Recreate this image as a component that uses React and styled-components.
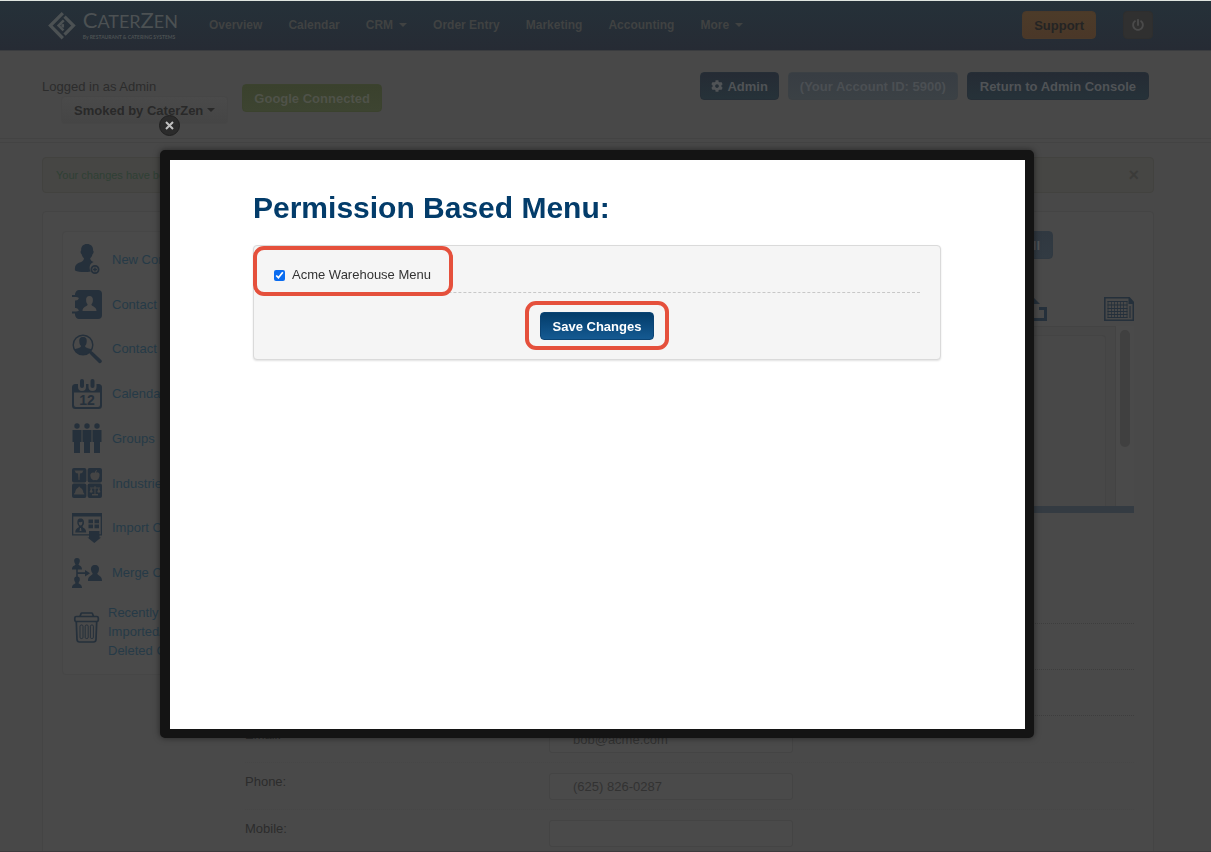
import styled, { createGlobalStyle } from 'styled-components';
import { FaCog, FaPowerOff } from 'react-icons/fa';

const GlobalStyle = createGlobalStyle`
  * {
    box-sizing: border-box;
  }

  body {
    margin: 0;
    background: #484848;
    color: #2c2c2c;
    font-family: "Liberation Sans", Arial, Helvetica, sans-serif;
    font-size: 13px;
    line-height: 18px;
  }

  button, input {
    font-family: inherit;
    font-size: inherit;
  }
`;

const Page = styled.div`
  height: 100vh;
  overflow: hidden;
  border-top: 1px solid #dfe5e0;
`;

const Container = styled.div`
  display: flex;
  align-items: ${({ $align }) => $align || 'center'};
  margin: 0 57px 0 42px;
`;

const NavBar = styled.nav`
  height: 50px;
  background: linear-gradient(#253139, #262b34);
  border-bottom: 1px solid #3a3c3f;
`;

const Logo = styled.a`
  display: flex;
  align-items: center;
  gap: 6px;
  width: 136px;
  height: 49px;
  margin: 0 31px 0 0;
  padding-left: 6px;
  color: #4c5153;
  text-decoration: none;
`;

const LogoText = styled.span`
  display: flex;
  flex-direction: column;
  padding-bottom: 4px;
  font-family: Lato, sans-serif;
  white-space: nowrap;
`;

const LogoName = styled.span`
  font-size: 18px;
  line-height: 26px;
`;

const LogoLetter = styled.span`
  font-size: ${({ $big }) => ($big ? '22px' : '18px')};
`;

const LogoTagline = styled.span`
  font-size: 5px;
  font-weight: 700;
  line-height: 6px;
`;

const NavList = styled.ul`
  display: flex;
  flex: 1;
  gap: 26px;
  margin: 0;
  padding: 0 0 2px;
  list-style: none;
`;

const NavLink = styled.a`
  color: #404242;
  font-size: 12px;
  font-weight: 700;
  text-decoration: none;
  white-space: nowrap;
`;

const Caret = styled.span`
  display: inline-block;
  margin-left: ${({ $gap }) => $gap || '6px'};
  border-top: 4px solid currentColor;
  border-left: 4px solid transparent;
  border-right: 4px solid transparent;
  vertical-align: middle;
`;

const tones = {
  navy: 'color: #505356; background: linear-gradient(#252b34, #263239); border-color: #262e36;',
  muted: 'color: #4b4f53; background: linear-gradient(#383d43, #3b4145); border-color: #3b4044;',
  blue: 'color: #505356; background: linear-gradient(#303840, #323b43); border-color: #303941;',
  green: 'color: #4f5249; background: linear-gradient(#3a412d, #3d4431); border-color: #3b422e;',
  orange: 'color: #242424; background: linear-gradient(#4c3b29, #4a3728); border-color: #4a3929;',
  dark: 'color: #4a4a4a; background: #303030; border-color: #2e2e2e;',
  grey: 'color: #292929; background: linear-gradient(#4a4a4a, #454545); border-color: #464646;',
  primary: 'color: #fff; background: linear-gradient(#033c6a, #155a92); border-color: #0b4474;',
};

const Button = styled.button`
  display: inline-flex;
  align-items: center;
  justify-content: center;
  gap: 4px;
  height: 28px;
  padding: 0 ${({ $pad }) => $pad || '12px'};
  border: 1px solid;
  border-radius: 4px;
  font-weight: 700;
  white-space: nowrap;
  ${({ $tone }) => tones[$tone]}
`;

const NavActions = styled.div`
  display: flex;
  gap: 27px;
  padding: 0 1px 1px 0;
`;

const Header = styled.header`
  height: 88px;
  border-bottom: 1px solid #434343;
`;

const HeaderRule = styled.div`
  height: 4px;
  border-bottom: 1px solid #434343;
`;

const Account = styled.div`
  display: flex;
  flex-direction: column;
  align-items: flex-start;
  margin: 27px 14px 0 0;
  font-size: 13px;

  button {
    margin-left: 19px;
  }
`;

const GoogleStatus = styled.div`
  flex: 1;
  padding-top: 33px;
`;

const AdminActions = styled.div`
  display: flex;
  gap: 9px;
  padding: 21px 5px 0 0;
`;

const Alert = styled.div`
  display: flex;
  flex: 1;
  align-items: center;
  justify-content: space-between;
  height: 36px;
  margin: 14px 0 18px;
  padding: 0 12px 0 13px;
  background: #464644;
  border: 1px solid #42423f;
  border-radius: 4px;
  color: #2f4034;
  font-size: 11px;
`;

const AlertClose = styled.button`
  padding: 0 2px;
  background: none;
  border: 0;
  color: #3b3b39;
  font-size: 18px;
  font-weight: 700;
`;

const Card = styled.main`
  display: flex;
  flex: 1;
  align-items: flex-start;
  gap: 20px;
  min-height: 760px;
  padding: 19px;
  background: #494949;
  border: 1px solid #444444;
  border-radius: 4px;
`;

const Sidebar = styled.aside`
  width: 163px;
  padding: 5px 9px 7px;
  background: #4a4a4a;
  border: 1px solid #464646;
  border-radius: 4px;
`;

const SideList = styled.ul`
  display: grid;
  grid-template-rows: repeat(8, 1fr) 72px;
  min-height: 430px;
  margin: 0;
  padding: 0;
  list-style: none;
`;

const SideLink = styled.a`
  display: flex;
  align-items: center;
  gap: ${({ $tight }) => ($tight ? '6px' : '10px')};
  height: 100%;
  color: #263a47;
  line-height: 19px;
  text-decoration: none;
  white-space: nowrap;

  svg {
    flex: none;
    margin-bottom: ${({ $tight }) => ($tight ? '8px' : '0')};
    color: #25303b;
  }
`;

const Details = styled.section`
  flex: 1;
  min-width: 0;
`;

const ViewRow = styled.div`
  display: flex;
  justify-content: flex-end;
  margin: 0 81px 37px 0;
`;

const ToolRow = styled.div`
  display: flex;
  justify-content: flex-end;
  gap: 57px;
  color: #25303b;
`;

const ListBox = styled.div`
  display: flex;
  height: 187px;
  margin-top: 4px;
  border-bottom: 7px solid #343b42;
`;

const ListBody = styled.div`
  flex: 1;
  padding: 8px 9px 0;
  background: #474747;
  border: 1px solid #434343;
  border-bottom: 0;
`;

const ListInner = styled.div`
  height: 100%;
  background: #484848;
  border: 1px solid #444444;
  border-bottom: 0;
  border-radius: 4px 4px 0 0;
`;

const ScrollTrack = styled.div`
  width: 18px;
  padding: 4px;
  background: #4a4a4a;
`;

const ScrollThumb = styled.div`
  height: 117px;
  background: #404040;
  border-radius: 5px;
`;

const Form = styled.form`
  padding-top: 65px;
`;

const Field = styled.div`
  display: grid;
  grid-template-columns: 304px 244px;
  align-items: start;
  height: ${({ $faint }) => ($faint ? '47px' : '46px')};
  padding-top: 10px;
  border-bottom: 1px dotted ${({ $faint }) => ($faint ? '#464646' : '#3d3d3d')};
`;

const TextInput = styled.input`
  height: 27px;
  padding: 0 23px;
  background: #4a4a4a;
  border: 1px solid #444444;
  border-radius: 3px;
  color: #323232;
`;

const Overlay = styled.div`
  position: fixed;
  inset: 0;
  display: flex;
  padding: 150px 177px 113px 160px;
  border-bottom: 1px solid #3d3a3d;
`;

const Modal = styled.div`
  position: relative;
  flex: 1;
  padding: 27px 84px 27px 83px;
  background: #fff;
  border: 9px solid #141414;
  border-top-width: 10px;
  border-left-width: 10px;
  border-radius: 5px;
  box-shadow: 0 0 6px rgba(0, 0, 0, 0.5);
`;

const CloseButton = styled.button`
  position: absolute;
  top: -45px;
  left: -11px;
  display: flex;
  align-items: center;
  justify-content: center;
  width: 21px;
  height: 21px;
  padding: 0;
  background: #2b2b2b;
  border: 1px solid #202020;
  border-radius: 50%;
  color: #c0c0c0;
`;

const Title = styled.h1`
  margin: 0 0 17px;
  color: #033c6a;
  font-size: 30px;
  line-height: 41px;
`;

const Well = styled.div`
  padding: 0 20px 19px;
  background: #f5f5f5;
  border: 1px solid #dadada;
  border-radius: 4px;
  box-shadow: 0 1px 2px rgba(0, 0, 0, 0.12);
`;

const OptionRow = styled.div`
  display: flex;
  padding: 20px 0 8px;
  border-bottom: 1px dashed #c8c8c8;
`;

const SaveRow = styled.div`
  display: flex;
  justify-content: center;
  padding-top: 19px;
`;

const Highlight = styled.div`
  position: relative;
  display: flex;

  &::after {
    content: '';
    position: absolute;
    inset: ${({ $inset }) => $inset};
    border: 4px solid #e5503c;
    border-radius: 11px;
    pointer-events: none;
  }
`;

const CheckLabel = styled.label`
  display: flex;
  align-items: center;
  gap: 7px;
  color: #333;
`;

const Check = styled.input`
  width: 11px;
  height: 11px;
  margin: 0;
  accent-color: #0a6cf0;
`;

const Icon = ({ children, height = 30 }) => (
  <svg width="30" height={height} viewBox={`0 0 30 ${height}`} fill="currentColor" aria-hidden="true">
    {children}
  </svg>
);

const NewContactIcon = () => (
  <Icon>
    <path d="M15 0c4 0 6.500 2.800 6 6.500 1 .3.700 3-.5 3.700-.4 2-1.300 3-2.300 4 .2 2 1 2.800 3.300 3.800-4 1.500-5 6-2.800 9.500-5 1-12 .8-15.700-1C2.500 22 4 20 7 18.800c3.500-1.200 4.800-2.200 5-4.600-1-1-1.900-2-2.300-4C8.500 9.500 8.200 6.800 9.200 6.500 8.800 2.800 11 0 15 0z" />
    <circle cx="23" cy="25.500" r="3.600" fill="none" stroke="currentColor" strokeWidth="1.800" />
    <path d="M22.300 23.500h1.400v1.300H25v1.400h-1.300v1.300h-1.400v-1.300H21v-1.400h1.300z" />
  </Icon>
);

const ContactBookIcon = () => (
  <Icon>
    <path d="M7 1h19a4 4 0 0 1 4 4v21a4 4 0 0 1-4 4H7q-3 0-4-4v-1.500H0v-2h4q1.500 0 3-1-1-2.500-3-2.500H3V11.500h1q2 0 3-2.500-1.500-1-3-1H0V6h3V5q1-4 4-4z" />
    <path fill="#4a4a4a" d="M17.500 7c2.500 0 3.600 1.800 3.400 4 0 2.500-.9 3.700-1.500 4.500.2 2.500 5.100 1.500 5.100 6.500h-14c0-5 4.900-4 5.100-6.500-.6-.8-1.500-2-1.500-4.500-.2-2.200.9-4 3.400-4z" />
  </Icon>
);

const SearchContactIcon = () => (
  <Icon>
    <circle cx="11" cy="11" r="9.800" fill="none" stroke="currentColor" strokeWidth="1.400" />
    <path d="M11 3c3 0 4 2 3.700 4.500-.1 2.500-1 3.800-1.700 4.500.3 2.500 5 2 6.500 3.500-1.500 3.500-5 5.300-8.500 5.300S4 19 2.500 15.500C4 14 8.700 14.500 9 12c-.7-.7-1.600-2-1.700-4.500C7 5 8 3 11 3z" />
    <path d="M18.500 16.500l2.500 1.700 8.500 8q.8 1.300-.3 2.300t-2.200.5L18 20l-1.300-2z" />
  </Icon>
);

const CalendarIcon = () => (
  <Icon>
    <path fillRule="evenodd" d="M3.500 5H6v3a4 4 0 0 0 8 0V5h2.500v3a4 4 0 0 0 8 0V5h2A3.500 3.500 0 0 1 30 8.500v18a3.500 3.500 0 0 1-3.500 3.500h-23A3.500 3.500 0 0 1 0 26.500v-18A3.500 3.500 0 0 1 3.500 5zM2 13.500v12.500a2 2 0 0 0 2 2h22a2 2 0 0 0 2-2V13.500z" />
    <rect x="8" y="0" width="4" height="9" rx="2" />
    <rect x="18.500" y="0" width="4" height="9" rx="2" />
    <text x="15" y="25.500" textAnchor="middle" fontSize="14" fontWeight="700">12</text>
  </Icon>
);

const GroupsIcon = () => (
  <Icon>
    {[5, 15, 25].map((x) => (
      <g key={x}>
        <circle cx={x} cy="3" r="2.700" />
        <path d={`M${x - 4.500} 7h9v12h-1.500v11h-6V19h-1.500z`} />
      </g>
    ))}
  </Icon>
);

const IndustriesIcon = () => (
  <Icon>
    <rect width="14.400" height="14.400" rx="2" />
    <rect x="15.600" width="14.400" height="14.400" rx="2" />
    <rect y="15.600" width="14.400" height="14.400" rx="2" />
    <rect x="15.600" y="15.600" width="14.400" height="14.400" rx="2" />
    <g fill="#454545">
      <path d="M2.500 2.500h9q-.5 2.500-3.500 3L7.500 12h-1L6 5.500q-3-.5-3.500-3z" />
      <path d="M22.700 4.700q.3-2 2-2.700l.5.700q-1 .6-1.200 1.800 3.500-.7 3.600 2.500-.3 4.500-3.100 5.200-1.500-.5-3 0Q18.500 11 18.300 7.200q.4-3.500 4.400-2.500z" />
      <path d="M2 26.500q0-1.500 1-1.800.5-4 3-5l1.200-1.500 1.200 1.500q2.500 1 3 5 1 .3 1 1.800z" />
      <path d="M22.500 18h1v1.500H28v1h-1l1.500 3.500q-1.700 1.500-3.300 0L26.500 20.500h-3V26H26v1.500h-6V26h2.500v-5.500h-3l1.300 3.500q-1.600 1.500-3.300 0L19 20.500h-1v-1h4.500z" />
    </g>
  </Icon>
);

const ImportIcon = () => (
  <Icon>
    <path fillRule="evenodd" d="M0 0h30v22.500H0zM1.300 3.500v17.700h27.400V3.500z" />
    <path d="M8.500 5.500c3.200 0 3.800 2.500 3.400 5.500l-1.400 2.500c.5 2 3.700 1.500 3.700 6H3.300c0-4.500 3.200-4 3.700-6L5.500 11c-.3-3-.2-5.500 3-5.500z" />
    <path fill="#4a4a4a" d="M6.700 9q2 .5 3.800-.5-.2 4-1.900 4T6.700 9zM8 15h1l.5 3h-2z" />
    <path d="M16.500 6.500h4.500v3.800h-4.500zM22.500 6.500H27v3.800h-4.500zM16.500 11.500h4.500v3.800h-4.500zM22.500 11.500H27v3.800h-4.500z" />
    <path d="M17 18h10.500v6.500H29L22.300 30 15.500 24.500H17z" />
  </Icon>
);

const MergeIcon = () => (
  <Icon>
    <path d="M5 0c2.300 0 3.200 1.500 2.700 4L6.500 6.500C7 8 10 7.500 10 11.500H0c0-4 3-3.500 3.500-5L2.300 4C1.800 1.500 2.700 0 5 0z" />
    <path d="M5 18.500c2.300 0 3.200 1.500 2.700 4L6.500 25c.5 1.500 3.500 1 3.500 5H0c0-4 3-3.500 3.500-5l-1.200-2.500c-.5-2.500.4-4 2.700-4z" />
    <path d="M4.200 10h1.600v4.300H13V12l5 3.200-5 3.200v-2.400H5.800V20H4.200z" />
    <path d="M23 7c3.500 0 4.500 2.500 3.800 5.500-.3 1.500-.8 2-1.500 3C26 18.500 30 17 30 23H16c0-6 4-4.500 4.700-7.500-.7-1-1.200-1.500-1.500-3C18.500 9.500 19.500 7 23 7z" />
  </Icon>
);

const TrashIcon = () => (
  <Icon height={31}>
    <g fill="none" stroke="currentColor" strokeWidth="1.700">
      <path d="M8 4.500L9 1.700q.3-.7 1-.7h9.500q.7 0 1 .7l1 2.800" />
      <rect x="2.800" y="4.500" width="23.500" height="5" rx="1.500" />
      <path d="M4.300 9.800l.7 17.700q.2 2.500 2.500 2.500h14q2.300 0 2.500-2.500l.7-17.700" />
    </g>
    <g fill="none" stroke="currentColor" strokeWidth="1">
      <rect x="8" y="13" width="3" height="13.500" rx="1.200" />
      <rect x="13.200" y="13" width="3" height="13.500" rx="1.200" />
      <rect x="18.400" y="13" width="3" height="13.500" rx="1.200" />
    </g>
  </Icon>
);

const ExportIcon = () => (
  <svg width="30" height="26" viewBox="0 0 30 26" fill="none" stroke="currentColor" strokeWidth="3" aria-hidden="true">
    <path d="M8 12.500H1.500v11h27v-11H22" />
    <path fill="currentColor" stroke="none" d="M15 0l8 8h-6v11h-4V8H7z" />
  </svg>
);

const SheetIcon = () => (
  <svg width="30" height="26" viewBox="0 0 30 26" fill="none" stroke="currentColor" aria-hidden="true">
    <path strokeWidth="1.600" d="M.8 1.800h24.500l4 4.500v18H.8z" />
    <path fill="currentColor" stroke="none" d="M24.500 1L30 6.500V8h-5.500z" />
    <path strokeWidth="1.200" d="M3.500 5.500h20M3.500 9h20M3.500 12.500h20M3.500 15.500h20M3.500 18.500h20M3.500 21.500h20M26 10v12" />
    <path strokeWidth=".8" d="M4 5v17M7.500 5v17M10.500 5v17M13.500 5v17M16.500 5v17M19.500 5v17M23 5v17" />
  </svg>
);

const LogoMark = () => (
  <svg width="30" height="30" viewBox="0 0 30 30" fill="none" stroke="currentColor" strokeWidth="3.400" aria-hidden="true">
    <path d="M15.500 1.500L2.500 14.500l13 13.300" />
    <path d="M17.300 5.200l9.300 9.300-9.300 9.500" />
    <path strokeWidth="2.600" d="M16.500 9L11 14.500l5.200 5.200" />
    <rect x="14" y="13" width="2.800" height="3.600" fill="currentColor" stroke="none" />
  </svg>
);

const navItems = [
  { label: 'Overview' },
  { label: 'Calendar' },
  { label: 'CRM', menu: true },
  { label: 'Order Entry' },
  { label: 'Marketing' },
  { label: 'Accounting' },
  { label: 'More', menu: true },
];

const sideItems = [
  { label: 'New Contact', icon: NewContactIcon },
  { label: 'Contact List', icon: ContactBookIcon },
  { label: 'Contact Search', icon: SearchContactIcon },
  { label: 'Calendar', icon: CalendarIcon },
  { label: 'Groups', icon: GroupsIcon },
  { label: 'Industries', icon: IndustriesIcon },
  { label: 'Import Contacts', icon: ImportIcon },
  { label: 'Merge Contacts', icon: MergeIcon },
];

const fields = [
  { id: 'email', label: 'Email:', value: 'bob@acme.com' },
  { id: 'phone', label: 'Phone:', value: '(625) 826-0287' },
  { id: 'mobile', label: 'Mobile:', value: '' },
];

const TopNav = () => (
  <NavBar>
    <Container>
      <Logo href="#" aria-label="CaterZen">
        <LogoMark />
        <LogoText>
          <LogoName>
            <LogoLetter $big>C</LogoLetter>
            <LogoLetter>ATER</LogoLetter>
            <LogoLetter $big>Z</LogoLetter>
            <LogoLetter>EN</LogoLetter>
          </LogoName>
          <LogoTagline>By RESTAURANT &amp; CATERING SYSTEMS</LogoTagline>
        </LogoText>
      </Logo>
      <NavList>
        {navItems.map(({ label, menu }) => (
          <li key={label}>
            <NavLink href="#">
              {label}
              {menu && <Caret />}
            </NavLink>
          </li>
        ))}
      </NavList>
      <NavActions>
        <Button type="button" $tone="orange" $pad="11px">Support</Button>
        <Button type="button" $tone="dark" $pad="8px" aria-label="Log out">
          <FaPowerOff size={12} />
        </Button>
      </NavActions>
    </Container>
  </NavBar>
);

const PermissionModal = () => (
  <Overlay>
    <Modal role="dialog" aria-labelledby="permission-title">
      <CloseButton type="button" aria-label="Close">
        <svg width="9" height="9" viewBox="0 0 9 9" stroke="currentColor" strokeWidth="2">
          <path d="M1 1l7 7M8 1L1 8" />
        </svg>
      </CloseButton>
      <Title id="permission-title">Permission Based Menu:</Title>
      <Well>
        <OptionRow>
          <Highlight $inset="-20px -22px -12px -21px">
            <CheckLabel>
              <Check type="checkbox" defaultChecked />
              Acme Warehouse Menu
            </CheckLabel>
          </Highlight>
        </OptionRow>
        <SaveRow>
          <Highlight $inset="-11px -15px -10px">
            <Button type="button" $tone="primary">Save Changes</Button>
          </Highlight>
        </SaveRow>
      </Well>
    </Modal>
  </Overlay>
);

export default function App() {
  return (
    <>
      <GlobalStyle />
      <Page>
        <TopNav />
        <Header>
          <Container $align="flex-start">
            <Account>
              Logged in as Admin
              <Button type="button" $tone="grey">
                Smoked by CaterZen
                <Caret $gap="0px" />
              </Button>
            </Account>
            <GoogleStatus>
              <Button type="button" $tone="green" $pad="11px">Google Connected</Button>
            </GoogleStatus>
            <AdminActions>
              <Button type="button" $tone="navy" $pad="10px">
                <FaCog size={12} />
                Admin
              </Button>
              <Button type="button" $tone="muted" $pad="11px">(Your Account ID: 5900)</Button>
              <Button type="button" $tone="navy">Return to Admin Console</Button>
            </AdminActions>
          </Container>
        </Header>
        <HeaderRule />
        <Container>
          <Alert role="status">
            Your changes have been saved.
            <AlertClose type="button" aria-label="Dismiss">×</AlertClose>
          </Alert>
        </Container>
        <Container>
          <Card>
            <Sidebar>
              <SideList>
                {sideItems.map(({ label, icon: ItemIcon }) => (
                  <li key={label}>
                    <SideLink href="#">
                      <ItemIcon />
                      {label}
                    </SideLink>
                  </li>
                ))}
                <li>
                  <SideLink href="#" $tight>
                    <TrashIcon />
                    <span>
                      Recently
                      <br />
                      Imported/
                      <br />
                      Deleted Contacts
                    </span>
                  </SideLink>
                </li>
              </SideList>
            </Sidebar>
            <Details>
              <ViewRow>
                <Button type="button" $tone="blue">View All</Button>
              </ViewRow>
              <ToolRow>
                <ExportIcon />
                <SheetIcon />
              </ToolRow>
              <ListBox>
                <ListBody>
                  <ListInner />
                </ListBody>
                <ScrollTrack>
                  <ScrollThumb />
                </ScrollTrack>
              </ListBox>
              <Form>
                <Field />
                <Field />
                <Field />
                {fields.map(({ id, label, value }) => (
                  <Field key={id} $faint>
                    <label htmlFor={id}>{label}</label>
                    <TextInput id={id} defaultValue={value} />
                  </Field>
                ))}
              </Form>
            </Details>
          </Card>
        </Container>
      </Page>
      <PermissionModal />
    </>
  );
}
